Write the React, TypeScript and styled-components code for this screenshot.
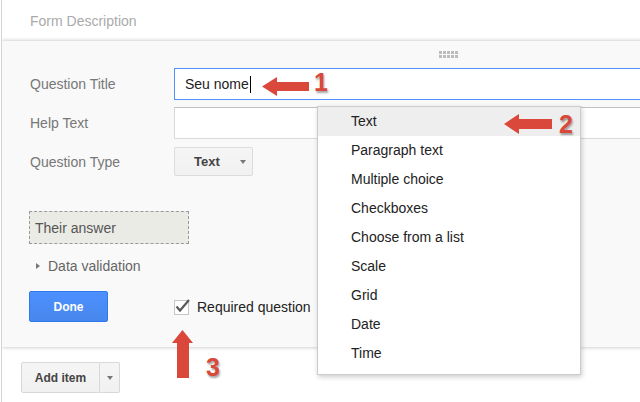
import React from "react";
import styled, { createGlobalStyle } from "styled-components";

const GlobalStyle = createGlobalStyle`
  html, body {
    margin: 0;
    padding: 0;
    background: #fff;
  }
  body {
    font-family: "Liberation Sans", Arial, sans-serif;
    overflow: hidden;
  }
`;

const RED = "#d9483b";

const Page = styled.div`
  position: relative;
  width: 639px;
  height: 402px;
  margin-left: 1px;
  border-left: 1px solid #d4d4d4;
  box-sizing: border-box;
  overflow: hidden;
  background: #fff;
`;

const Header = styled.div`
  height: 41px;
  line-height: 42px;
  padding-left: 28px;
  font-size: 14px;
  color: #aaa;
`;

const Panel = styled.div`
  width: 865px;
  box-sizing: border-box;
  background: #f9f9f9;
  box-shadow: 0 0 4px rgba(0, 0, 0, 0.28);
  padding: 0 0 25px 27px;
`;

const Handle = styled.div`
  height: 27px;
  box-sizing: border-box;
  padding-top: 10px;
  display: flex;
  justify-content: center;
`;

const Dots = styled.div`
  display: grid;
  grid-template-columns: repeat(5, 3px);
  grid-auto-rows: 3px;
  gap: 1px;
  span {
    background: #bcbcbc;
  }
`;

const FieldRow = styled.div<{ $top?: number }>`
  display: grid;
  grid-template-columns: 145px 1fr;
  align-items: center;
  margin-top: ${(p) => p.$top ?? 0}px;
`;

const Label = styled.div`
  padding-left: 1px;
  font-size: 14px;
  color: #777;
`;

const TextInput = styled.div<{ $focused?: boolean }>`
  height: 32px;
  box-sizing: border-box;
  border: 1px solid ${(p) => (p.$focused ? "#4d90fe" : "#d9d9d9")};
  border-top-color: ${(p) => (p.$focused ? "#4d90fe" : "#c0c0c0")};
  background: #fff;
  padding-left: 10px;
  display: flex;
  align-items: center;
  font-size: 14px;
  color: #222;
`;

const Caret = styled.span`
  display: inline-block;
  width: 1px;
  height: 17px;
  margin-left: 1px;
  background: #000;
`;

const TypeButton = styled.div`
  width: 79px;
  height: 29px;
  box-sizing: border-box;
  border: 1px solid #dcdcdc;
  border-radius: 2px;
  background: linear-gradient(#f5f5f5, #f1f1f1);
  display: flex;
  align-items: center;
  padding: 0 6px 0 19px;
  font-size: 13px;
  font-weight: bold;
  color: #444;
`;

const DownTriangle = styled.span`
  width: 0;
  height: 0;
  margin-left: auto;
  border-left: 3.5px solid transparent;
  border-right: 3.5px solid transparent;
  border-top: 4px solid #777;
`;

const AnswerBox = styled.div`
  margin-top: 35px;
  width: 160px;
  height: 33px;
  box-sizing: border-box;
  border: 1px dashed #9a9a9a;
  background: #ebebe6;
  padding-left: 5px;
  display: flex;
  align-items: center;
  font-size: 14px;
  color: #555;
`;

const ValidationRow = styled.div`
  margin-top: 12px;
  height: 20px;
  padding-left: 7px;
  display: flex;
  align-items: center;
  font-size: 14px;
  color: #666;
`;

const RightTriangle = styled.span`
  width: 0;
  height: 0;
  margin-right: 8px;
  border-top: 3.5px solid transparent;
  border-bottom: 3.5px solid transparent;
  border-left: 4px solid #777;
`;

const ActionRow = styled.div`
  margin-top: 15px;
  display: grid;
  grid-template-columns: 145px auto;
  align-items: center;
`;

const DoneButton = styled.div`
  width: 79px;
  height: 31px;
  box-sizing: border-box;
  border: 1px solid #3079ed;
  border-radius: 2px;
  background: linear-gradient(#4d90fe, #4787ed);
  color: #fff;
  font-size: 12px;
  font-weight: bold;
  display: flex;
  align-items: center;
  justify-content: center;
`;

const Required = styled.div`
  display: flex;
  align-items: center;
  gap: 5px;
  font-size: 14px;
  color: #222;
`;

const Footer = styled.div`
  margin: 15px 0 0 19px;
  display: flex;
`;

const GrayButton = styled.div<{ $w: number; $side: "left" | "right" }>`
  width: ${(p) => p.$w}px;
  height: 31px;
  box-sizing: border-box;
  border: 1px solid #d8d8d8;
  border-left-width: ${(p) => (p.$side === "right" ? 0 : 1)}px;
  border-radius: ${(p) => (p.$side === "left" ? "2px 0 0 2px" : "0 2px 2px 0")};
  background: linear-gradient(#f5f5f5, #f1f1f1);
  display: flex;
  align-items: center;
  justify-content: center;
  font-size: 12px;
  font-weight: bold;
  color: #444;

  ${DownTriangle} {
    margin-left: 0;
  }
`;

const Menu = styled.div`
  position: absolute;
  left: 315px;
  top: 106px;
  width: 264px;
  box-sizing: border-box;
  border: 1px solid #ccc;
  background: #fff;
  box-shadow: 1px 2px 5px rgba(0, 0, 0, 0.2);
  padding-bottom: 6px;
`;

const MenuItem = styled.div<{ $active?: boolean }>`
  height: 29px;
  line-height: 29px;
  padding-left: 33px;
  font-size: 14px;
  color: #222;
  background: ${(p) => (p.$active ? "#eee" : "transparent")};
`;

const Mark = styled.svg`
  position: absolute;
  fill: ${RED};
`;

const Num = styled.span`
  position: absolute;
  font-size: 25px;
  line-height: 25px;
  font-weight: bold;
  color: ${RED};
  text-shadow: 1px 2px 2px rgba(0, 0, 0, 0.35);
`;

const menuItems = [
  "Text",
  "Paragraph text",
  "Multiple choice",
  "Checkboxes",
  "Choose from a list",
  "Scale",
  "Grid",
  "Date",
  "Time",
];

const CheckIcon = () => (
  <svg width="18" height="17" viewBox="0 0 18 17">
    <rect x="0.5" y="2.5" width="14" height="14" fill="#fff" stroke="#c6c6c6" />
    <polyline
      points="2.5,8.5 6,12.5 15,2"
      fill="none"
      stroke="#5a5a5a"
      strokeWidth="2.2"
    />
  </svg>
);

export default function App() {
  return (
    <>
      <GlobalStyle />
      <Page>
        <Header>Form Description</Header>

        <Panel>
          <Handle>
            <Dots>
              {Array.from({ length: 10 }).map((_, i) => (
                <span key={i} />
              ))}
            </Dots>
          </Handle>

          <FieldRow>
            <Label>Question Title</Label>
            <TextInput $focused>
              Seu nome
              <Caret />
            </TextInput>
          </FieldRow>
          <FieldRow $top={7}>
            <Label>Help Text</Label>
            <TextInput />
          </FieldRow>
          <FieldRow $top={8}>
            <Label>Question Type</Label>
            <TypeButton>
              Text
              <DownTriangle />
            </TypeButton>
          </FieldRow>

          <AnswerBox>Their answer</AnswerBox>

          <ValidationRow>
            <RightTriangle />
            Data validation
          </ValidationRow>

          <ActionRow>
            <DoneButton>Done</DoneButton>
            <Required>
              <CheckIcon />
              Required question
            </Required>
          </ActionRow>
        </Panel>

        <Footer>
          <GrayButton $w={79} $side="left">
            Add item
          </GrayButton>
          <GrayButton $w={20} $side="right">
            <DownTriangle />
          </GrayButton>
        </Footer>

        <Menu>
          {menuItems.map((item, i) => (
            <MenuItem key={item} $active={i === 0}>
              {item}
            </MenuItem>
          ))}
        </Menu>

        <Mark width="47" height="19" viewBox="0 0 47 19" style={{ left: 260, top: 77 }}>
          <polygon points="0,9.5 15,0 15,5 47,5 47,14 15,14 15,19" />
        </Mark>
        <Num style={{ left: 312, top: 70 }}>1</Num>

        <Mark width="48" height="20" viewBox="0 0 48 20" style={{ left: 502, top: 114 }}>
          <polygon points="0,10 15,0 15,5 48,5 48,15 15,15 15,20" />
        </Mark>
        <Num style={{ left: 557, top: 112 }}>2</Num>

        <Mark width="21" height="48" viewBox="0 0 21 48" style={{ left: 170, top: 330 }}>
          <polygon points="10.5,0 21,13 17,13 17,48 5,48 5,13 0,13" />
        </Mark>
        <Num style={{ left: 204, top: 355 }}>3</Num>
      </Page>
    </>
  );
}
